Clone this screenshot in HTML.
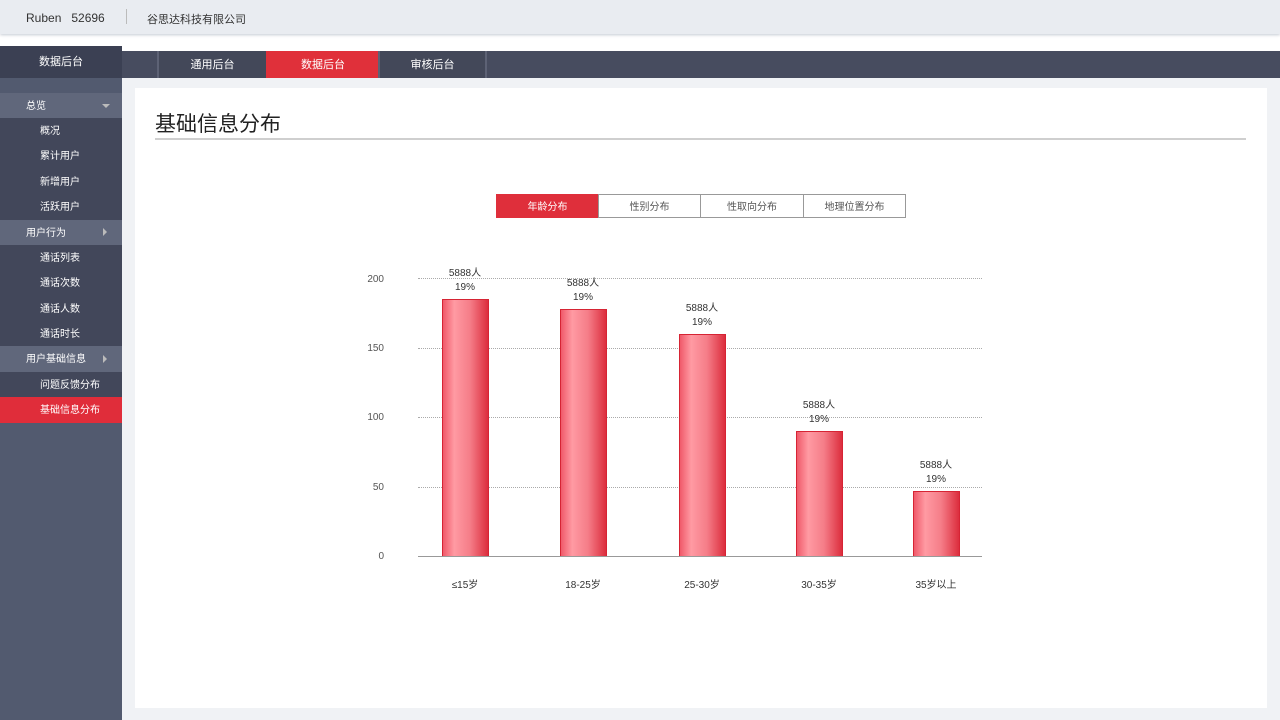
<!DOCTYPE html>
<html><head><meta charset="utf-8"><style>
*{margin:0;padding:0;box-sizing:border-box}
body{width:1280px;height:720px;overflow:hidden;background:#fff;font-family:"Liberation Sans","Noto Sans CJK SC",sans-serif;position:relative}
.a{position:absolute}
.top{left:0;top:0;width:1280px;height:34px;background:#e9ecf1;box-shadow:0 1px 3px #c5cad3;font-size:12px;color:#333}
.side{left:0;top:78px;width:122px;height:642px;background:#525a6f}
.row{position:absolute;left:0;width:122px;height:25px;font-size:10px;color:#fff;line-height:27px}
.g{background:#60677b;padding-left:26px}
.s{background:#42475a;padding-left:40px}
.tab{position:absolute;top:51px;height:27px;line-height:28px;text-align:center;color:#fff;font-size:11px;border-left:2px solid #5d6275;background:#434859}
.bar{position:absolute;width:47px;background:linear-gradient(90deg,#f05a6a,#ff9aa3 25%,#f57d88 60%,#dc2e3e);border:1px solid #d62434;border-bottom:none}
.lb{position:absolute;width:80px;text-align:center;font-size:10px;color:#333}
.yl{position:absolute;left:356px;width:28px;text-align:right;font-size:10px;color:#555}
.gl{position:absolute;left:418px;width:564px;border-top:1px dotted #aaa}
.btn{position:absolute;top:194px;height:24px;line-height:25px;text-align:center;font-size:10px;color:#555;border:1px solid #999;background:#fff}
</style></head><body>
<div class="a top"><span class="a" style="left:26px;top:11px">Ruben&nbsp;&nbsp;&nbsp;52696</span><span class="a" style="left:126px;top:9px;width:1px;height:15px;background:#bbb"></span><span class="a" style="left:147px;top:11px;font-size:11px">谷思达科技有限公司</span></div>
<div class="a" style="left:0;top:46px;width:122px;height:32px;background:#3b4053;color:#fff;font-size:11px;text-align:center;line-height:32px">数据后台</div>
<div class="a" style="left:122px;top:51px;width:1158px;height:27px;background:#474c5f"></div>
<div class="tab" style="left:157px;width:109px">通用后台</div>
<div class="tab" style="left:266px;width:112px;background:#e0303a;border-left-color:#e0303a">数据后台</div>
<div class="tab" style="left:378px;width:109px;border-right:2px solid #5d6275">审核后台</div>
<div class="a side">
<div class="row g" style="top:15px">总览<span class="a" style="left:102px;top:11px;border:4px solid transparent;border-top:4px solid #bbb;border-bottom:none"></span></div>
<div class="row s" style="top:40px">概况</div>
<div class="row s" style="top:65px;height:26px">累计用户</div>
<div class="row s" style="top:91px">新增用户</div>
<div class="row s" style="top:116px;height:26px">活跃用户</div>
<div class="row g" style="top:142px">用户行为<span class="a" style="left:103px;top:8px;border:4px solid transparent;border-left:4px solid #bbb;border-right:none"></span></div>
<div class="row s" style="top:167px">通话列表</div>
<div class="row s" style="top:192px;height:26px">通话次数</div>
<div class="row s" style="top:218px">通话人数</div>
<div class="row s" style="top:243px;height:25px">通话时长</div>
<div class="row g" style="top:268px;height:26px">用户基础信息<span class="a" style="left:103px;top:9px;border:4px solid transparent;border-left:4px solid #bbb;border-right:none"></span></div>
<div class="row s" style="top:294px">问题反馈分布</div>
<div class="row s" style="top:319px;height:26px;background:#e02d3a">基础信息分布</div>
</div>
<div class="a" style="left:122px;top:78px;width:1158px;height:642px;background:#f0f2f5"></div>
<div class="a" style="left:135px;top:88px;width:1132px;height:620px;background:#fff"></div>
<div class="a" style="left:155px;top:108px;font-size:21px;color:#222">基础信息分布</div>
<div class="a" style="left:155px;top:138px;width:1091px;height:2px;background:#cfcfcf"></div>
<div class="btn" style="left:496px;width:103px;background:#df2f3b;border-color:#df2f3b;color:#fff">年龄分布</div>
<div class="btn" style="left:598px;width:103px">性别分布</div>
<div class="btn" style="left:700px;width:104px">性取向分布</div>
<div class="btn" style="left:803px;width:103px">地理位置分布</div>
<div class="gl" style="top:278px"></div><div class="gl" style="top:348px"></div><div class="gl" style="top:417px"></div><div class="gl" style="top:487px"></div>
<div class="a" style="left:418px;top:556px;width:564px;height:1px;background:#999"></div>
<div class="yl" style="top:274px">200</div><div class="yl" style="top:343px">150</div><div class="yl" style="top:412px">100</div><div class="yl" style="top:482px">50</div><div class="yl" style="top:551px">0</div>
<div class="bar" style="left:442px;top:299px;height:257px"></div>
<div class="bar" style="left:560px;top:309px;height:247px"></div>
<div class="bar" style="left:679px;top:334px;height:222px"></div>
<div class="bar" style="left:796px;top:431px;height:125px"></div>
<div class="bar" style="left:913px;top:491px;height:65px"></div>
<div class="lb" style="left:425px;top:264px">5888人</div><div class="lb" style="left:425px;top:282px">19%</div>
<div class="lb" style="left:543px;top:274px">5888人</div><div class="lb" style="left:543px;top:292px">19%</div>
<div class="lb" style="left:662px;top:299px">5888人</div><div class="lb" style="left:662px;top:317px">19%</div>
<div class="lb" style="left:779px;top:396px">5888人</div><div class="lb" style="left:779px;top:414px">19%</div>
<div class="lb" style="left:896px;top:456px">5888人</div><div class="lb" style="left:896px;top:474px">19%</div>
<div class="lb" style="left:425px;top:576px">≤15岁</div>
<div class="lb" style="left:543px;top:576px">18-25岁</div>
<div class="lb" style="left:662px;top:576px">25-30岁</div>
<div class="lb" style="left:779px;top:576px">30-35岁</div>
<div class="lb" style="left:896px;top:576px">35岁以上</div>
</body></html>
